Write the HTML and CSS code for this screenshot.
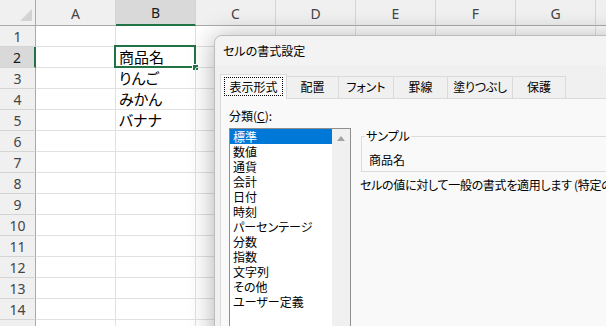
FILE: index.html
```html
<!DOCTYPE html>
<html>
<head>
    <meta charset="utf-8">
    <title>セルの書式設定</title>
    <link rel="stylesheet" href="styles.css">
</head>
<body>
    <div class="sheet">
        <div class="grid">
            <div class="corner">
                <svg width="12" height="12" viewBox="0 0 12 12"><polygon points="12,0 12,12 0,12" fill="#d3d3d3"/></svg>
            </div>
            <div class="col-head">A</div>
            <div class="col-head active">B</div>
            <div class="col-head">C</div>
            <div class="col-head">D</div>
            <div class="col-head">E</div>
            <div class="col-head">F</div>
            <div class="col-head">G</div>
            <div class="col-head">H</div>

            <div class="row-head">1</div>
            <div class="cell"></div><div class="cell"></div><div class="cell"></div><div class="cell"></div><div class="cell"></div><div class="cell"></div><div class="cell"></div><div class="cell"></div>

            <div class="row-head active">2</div>
            <div class="cell"></div>
            <div class="cell current">商品名<span class="selection"><span class="fill-handle"></span></span></div>
            <div class="cell"></div><div class="cell"></div><div class="cell"></div><div class="cell"></div><div class="cell"></div><div class="cell"></div>

            <div class="row-head">3</div>
            <div class="cell"></div><div class="cell">りんご</div><div class="cell"></div><div class="cell"></div><div class="cell"></div><div class="cell"></div><div class="cell"></div><div class="cell"></div>

            <div class="row-head">4</div>
            <div class="cell"></div><div class="cell">みかん</div><div class="cell"></div><div class="cell"></div><div class="cell"></div><div class="cell"></div><div class="cell"></div><div class="cell"></div>

            <div class="row-head">5</div>
            <div class="cell"></div><div class="cell">バナナ</div><div class="cell"></div><div class="cell"></div><div class="cell"></div><div class="cell"></div><div class="cell"></div><div class="cell"></div>

            <div class="row-head">6</div>
            <div class="cell"></div><div class="cell"></div><div class="cell"></div><div class="cell"></div><div class="cell"></div><div class="cell"></div><div class="cell"></div><div class="cell"></div>
            <div class="row-head">7</div>
            <div class="cell"></div><div class="cell"></div><div class="cell"></div><div class="cell"></div><div class="cell"></div><div class="cell"></div><div class="cell"></div><div class="cell"></div>
            <div class="row-head">8</div>
            <div class="cell"></div><div class="cell"></div><div class="cell"></div><div class="cell"></div><div class="cell"></div><div class="cell"></div><div class="cell"></div><div class="cell"></div>
            <div class="row-head">9</div>
            <div class="cell"></div><div class="cell"></div><div class="cell"></div><div class="cell"></div><div class="cell"></div><div class="cell"></div><div class="cell"></div><div class="cell"></div>
            <div class="row-head">10</div>
            <div class="cell"></div><div class="cell"></div><div class="cell"></div><div class="cell"></div><div class="cell"></div><div class="cell"></div><div class="cell"></div><div class="cell"></div>
            <div class="row-head">11</div>
            <div class="cell"></div><div class="cell"></div><div class="cell"></div><div class="cell"></div><div class="cell"></div><div class="cell"></div><div class="cell"></div><div class="cell"></div>
            <div class="row-head">12</div>
            <div class="cell"></div><div class="cell"></div><div class="cell"></div><div class="cell"></div><div class="cell"></div><div class="cell"></div><div class="cell"></div><div class="cell"></div>
            <div class="row-head">13</div>
            <div class="cell"></div><div class="cell"></div><div class="cell"></div><div class="cell"></div><div class="cell"></div><div class="cell"></div><div class="cell"></div><div class="cell"></div>
            <div class="row-head">14</div>
            <div class="cell"></div><div class="cell"></div><div class="cell"></div><div class="cell"></div><div class="cell"></div><div class="cell"></div><div class="cell"></div><div class="cell"></div>
            <div class="row-head">15</div>
            <div class="cell"></div><div class="cell"></div><div class="cell"></div><div class="cell"></div><div class="cell"></div><div class="cell"></div><div class="cell"></div><div class="cell"></div>
        </div>

        <div class="dialog">
            <div class="dialog-title">セルの書式設定</div>
            <div class="dialog-body">
                <div class="tabs">
                    <div class="tab selected"><span class="focus">表示形式</span></div>
                    <div class="tab tab-align">配置</div>
                    <div class="tab tab-font">フォント</div>
                    <div class="tab tab-border">罫線</div>
                    <div class="tab tab-fill">塗りつぶし</div>
                    <div class="tab tab-protect">保護</div>
                </div>
                <div class="tab-page">
                    <div class="field-label">分類(<u>C</u>):</div>
                    <div class="format-row">
                        <div class="listbox">
                            <ul class="list-items">
                                <li class="selected">標準</li>
                                <li>数値</li>
                                <li>通貨</li>
                                <li>会計</li>
                                <li>日付</li>
                                <li>時刻</li>
                                <li>パーセンテージ</li>
                                <li>分数</li>
                                <li>指数</li>
                                <li>文字列</li>
                                <li>その他</li>
                                <li>ユーザー定義</li>
                            </ul>
                            <div class="scrollbar">
                                <svg width="8" height="5" viewBox="0 0 8 5"><polygon points="4,0 8,5 0,5" fill="#a3a3a3"/></svg>
                            </div>
                        </div>
                        <div class="format-detail">
                            <fieldset class="sample">
                                <legend>サンプル</legend>
                                <div class="sample-value">商品名</div>
                            </fieldset>
                            <p class="description">セルの値に対して一般の書式を適用します (特定の書式は設定されません)。</p>
                        </div>
                    </div>
                </div>
            </div>
        </div>
    </div>
</body>
</html>
```

FILE: styles.css
```css
html, body {
    margin: 0;
    overflow: hidden;
    background: #ffffff;
}

.sheet {
    position: relative;
    width: 606px;
    height: 326px;
    overflow: hidden;
}

/* spreadsheet */

.grid {
    display: grid;
    grid-template-columns: 36px repeat(8, 80px);
    grid-template-rows: 26px;
    grid-auto-rows: 21px;
    font-family: "Noto Sans CJK JP", sans-serif;
    font-feature-settings: "palt";
    font-size: 15px;
    color: #000;
}

.corner {
    background: #f0f0f0;
    border-right: 1px solid #ababab;
    border-bottom: 1px solid #ababab;
    box-sizing: border-box;
    display: flex;
    align-items: flex-end;
    justify-content: flex-end;
    padding: 0 3px 4px 0;
}

.col-head,
.row-head {
    box-sizing: border-box;
    background: #f0f0f0;
    font-family: "Noto Sans", sans-serif;
    font-size: 14px;
    color: #444;
    display: flex;
    align-items: center;
    justify-content: center;
}

.col-head {
    border-right: 1px solid #d4d4d4;
    border-bottom: 1px solid #ababab;
    padding-top: 1px;
}

.col-head.active {
    background: #d9d9d9;
    color: #1b1b1b;
    border-bottom: 2px solid #217346;
}

.row-head {
    border-right: 1px solid #ababab;
    border-bottom: 1px solid #d4d4d4;
}

.row-head.active {
    background: #d9d9d9;
    color: #1b1b1b;
    border-right: 2px solid #217346;
}

.cell {
    position: relative;
    box-sizing: border-box;
    border-right: 1px solid #e1e1e1;
    border-bottom: 1px solid #e1e1e1;
    padding-left: 3px;
    line-height: 20px;
    white-space: nowrap;
}

.selection {
    position: absolute;
    top: -2px;
    left: -2px;
    right: -1px;
    bottom: -1px;
    border: 2px solid #217346;
}

.fill-handle {
    position: absolute;
    right: -5px;
    bottom: -5px;
    width: 5px;
    height: 5px;
    background: #217346;
    border: 1px solid #ffffff;
}

/* dialog */

.dialog {
    position: absolute;
    left: 214px;
    top: 35px;
    width: 440px;
    height: 330px;
    background: #f0f0f0;
    border: 1px solid #bcbcbc;
    border-radius: 8px;
    box-shadow: 0 2px 26px rgba(0, 0, 0, 0.32);
    font-family: "Noto Sans CJK JP", sans-serif;
    font-feature-settings: "palt";
    font-size: 12px;
    color: #000;
}

.dialog-title {
    height: 29px;
    line-height: 29px;
    padding: 0 8px;
    background: #f3f3f3;
    border-radius: 8px 8px 0 0;
}

.dialog-body {
    padding: 11px 0 0 5px;
}

.tabs {
    display: flex;
    align-items: flex-end;
    height: 22px;
}

.tab {
    box-sizing: border-box;
    height: 22px;
    margin-left: -1px;
    line-height: 20px;
    text-align: center;
    white-space: nowrap;
    background: #f0f0f0;
    border: 1px solid #dadada;
    border-bottom: none;
}

.tab-align   { width: 53px; }
.tab-font    { width: 56px; }
.tab-border  { width: 55px; }
.tab-fill    { width: 66px; letter-spacing: -0.3px; }
.tab-protect { width: 54px; }

.tab.selected {
    position: relative;
    z-index: 1;
    width: 67px;
    height: 25px;
    margin: 0 0 -1px 0;
    background: #f9f9f9;
}

.focus {
    display: block;
    margin: 2px 3px 0;
    border: 1px dotted #000;
    line-height: 17px;
}

.tab-page {
    height: 260px;
    padding: 9px 8px 0;
    background: #f9f9f9;
    border: 1px solid #dadada;
    border-right: none;
}

.field-label {
    line-height: 16px;
    margin-bottom: 4px;
}

.format-row {
    display: flex;
    align-items: flex-start;
}

.listbox {
    display: flex;
    width: 122px;
    height: 200px;
    box-sizing: border-box;
    border: 1px solid #8f8f8f;
    background: #ffffff;
}

.list-items {
    flex: 1;
    list-style: none;
    margin: 0;
    padding: 0;
}

.list-items li {
    line-height: 15px;
    padding-left: 3px;
    white-space: nowrap;
}

.list-items li.selected {
    background: #0078d7;
    color: #ffffff;
}

.scrollbar {
    width: 18px;
    background: #f0f0f0;
    display: flex;
    justify-content: center;
    padding-top: 7px;
    box-sizing: border-box;
}

.format-detail {
    flex: 1;
    margin-left: 9px;
    min-width: 0;
}

.sample {
    margin: 0 0 0 1px;
    padding: 0 0 3px 3px;
    border: 1px solid #dcdcdc;
    min-width: 0;
}

.sample legend {
    padding: 0 1px;
    line-height: 16px;
}

.sample-value {
    margin-top: 8px;
    padding-left: 4px;
    line-height: 16px;
}

.description {
    margin: 5px 0 0;
    line-height: 16px;
    letter-spacing: -0.3px;
    white-space: nowrap;
}
```
